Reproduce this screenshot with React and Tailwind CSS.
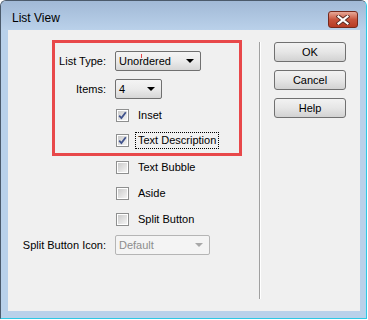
import React from 'react';

const font = { fontFamily: '"Liberation Sans", Arial, sans-serif' };

const Arrow = ({ disabled }) => (
  <svg width="8" height="4" viewBox="0 0 8 4" className="shrink-0">
    <path d="M0 0h8L4 4z" fill={disabled ? '#a8a8a8' : '#000'} />
  </svg>
);

const Select = ({ value, width, disabled, children }) => (
  <div
    className={`relative flex items-center justify-between h-[20px] rounded-[2px] border pl-[3px] pr-[6px] ${
      disabled
        ? 'border-[#b5b5b5] bg-[#f4f4f4] text-[#8d8d8d]'
        : 'border-[#707070] bg-gradient-to-b from-[#f4f4f4] via-[#ebebeb] to-[#d6d6d6] text-black'
    }`}
    style={{ width }}
  >
    <span className="leading-none">{value}</span>
    <Arrow disabled={disabled} />
    {children}
  </div>
);

const Check = ({ checked, label, focused }) => (
  <div className="flex items-center h-[17px] pl-[108px]">
    <div className="w-[13px] h-[13px] border border-[#8e8f8f] bg-white p-[1px] shrink-0">
      <div className="w-full h-full bg-gradient-to-br from-[#cbcbcb] to-[#f4f4f4] flex items-center justify-center">
        {checked && (
          <svg width="9" height="9" viewBox="0 0 9 9">
            <path d="M1.2 4.6 L3.4 7 L7.8 1.2" stroke="#41538d" strokeWidth="1.8" fill="none" />
          </svg>
        )}
      </div>
    </div>
    <span
      className={`ml-[6px] px-[2px] h-[17px] flex items-center border ${
        focused ? 'border-dotted border-black' : 'border-transparent'
      }`}
    >
      {label}
    </span>
  </div>
);

const Button = ({ children }) => (
  <div className="w-[72px] h-[20px] rounded-[3px] border border-[#707070] bg-gradient-to-b from-[#f2f2f2] via-[#e6e6e6] to-[#d2d2d2] flex items-center justify-center leading-none">
    {children}
  </div>
);

export default function App() {
  return (
    <div className="w-[368px] h-[320px] bg-white text-[11px] text-black" style={font}>
      <div className="w-[367px] h-[319px] rounded-t-[6px] border border-[#4b5a6b] border-r-[#2ec9e4] border-b-[#2ec9e4] bg-[#b9d1ea] flex flex-col overflow-hidden">
        {/* title bar */}
        <div className="h-[29px] shrink-0 flex items-center justify-between pl-[11px] pr-[8px] bg-gradient-to-b from-[#a1b9d6] to-[#bad1ea]">
          <span className="text-[12px] pt-[4px]">List View</span>
          <div className="mt-[8px] w-[30px] h-[17px] rounded-[3px] border border-[#76291c] bg-gradient-to-b from-[#e6a898] via-[#c8543d] to-[#b73b24] flex items-center justify-center">
            <svg width="14" height="10" viewBox="0 0 14 10">
              <path d="M2.5 1.5 L11.5 8.5 M11.5 1.5 L2.5 8.5" stroke="#5a2a22" strokeWidth="4" strokeLinecap="square" />
              <path d="M2.5 1.5 L11.5 8.5 M11.5 1.5 L2.5 8.5" stroke="#fff" strokeWidth="2.2" strokeLinecap="square" />
            </svg>
          </div>
        </div>

        {/* content */}
        <div className="ml-[7px] w-[352px] h-[281px] bg-[#f0f0f0] flex">
          <div className="w-[251px] flex flex-col">
            <div className="ml-[44px] mt-[10px] w-[190px] h-[116px] border-[3px] border-[#e8484a] flex flex-col gap-[8px] pt-[8px]">
              <div className="flex items-center">
                <span className="w-[51px] text-right">List Type:</span>
                <div className="ml-[9px]">
                  <Select value="Unordered" width={86}>
                    <span className="absolute left-[25px] top-[2px] w-[1px] h-[4px] bg-[#e8484a]" />
                  </Select>
                </div>
              </div>
              <div className="flex items-center">
                <span className="w-[51px] text-right">Items:</span>
                <div className="ml-[9px]">
                  <Select value="4" width={47} />
                </div>
              </div>
              <div className="-ml-[47px] flex flex-col gap-[8px]">
                <Check checked label="Inset" />
                <Check checked focused label="Text Description" />
              </div>
            </div>
            <div className="mt-[3px] flex flex-col gap-[9px]">
              <Check label="Text Bubble" />
              <Check label="Aside" />
              <Check label="Split Button" />
            </div>
            <div className="mt-[7px] flex items-center">
              <span className="w-[98px] text-right">Split Button Icon:</span>
              <div className="ml-[9px]">
                <Select value="Default" width={95} disabled />
              </div>
            </div>
          </div>

          <div className="mt-[12px] h-[257px] w-[2px] border-l border-[#a0a0a0] bg-white" />

          <div className="ml-[13px] mt-[12px] flex flex-col gap-[8px]">
            <Button>OK</Button>
            <Button>Cancel</Button>
            <Button>Help</Button>
          </div>
        </div>
      </div>
    </div>
  );
}
